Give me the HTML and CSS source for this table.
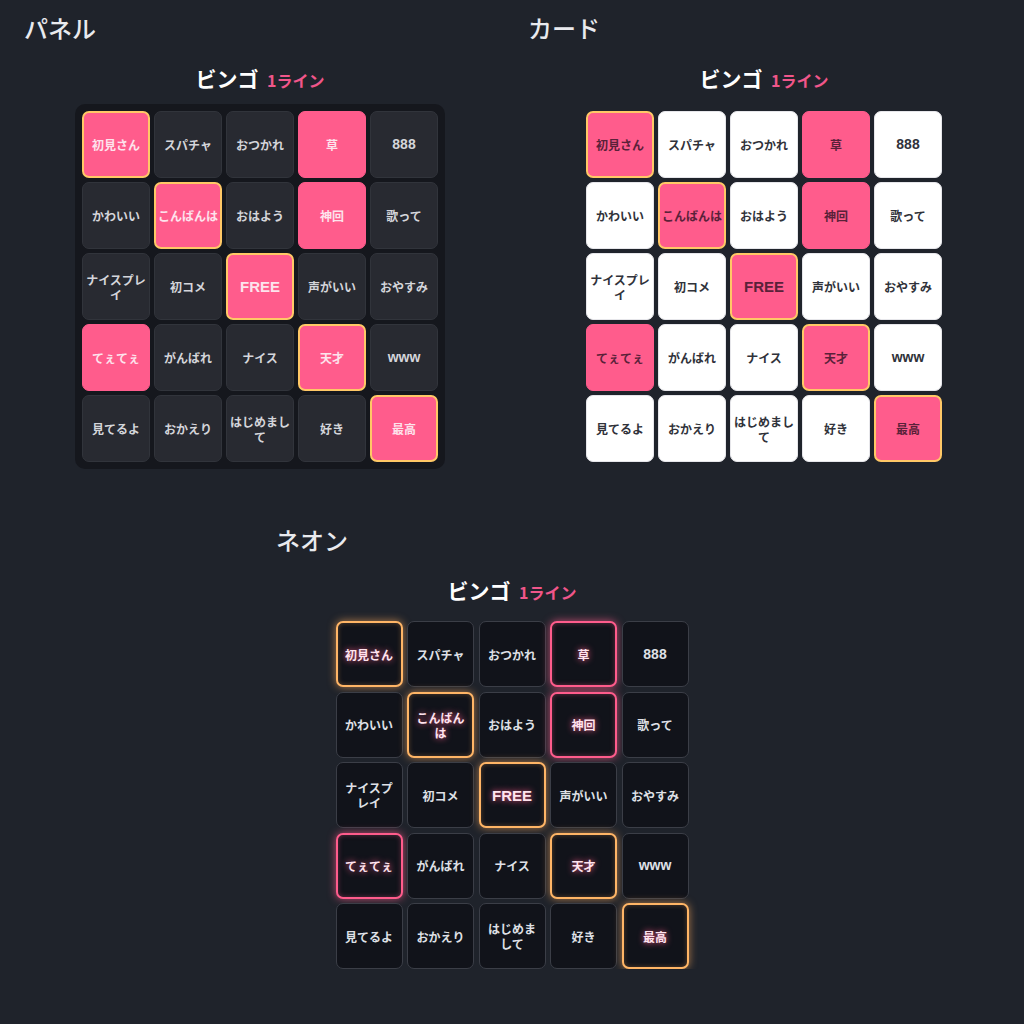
FILE: index.html
```html
<!DOCTYPE html>
<html lang="ja">
<head>
<meta charset="utf-8">
<title>ビンゴ スタイル</title>
<link rel="stylesheet" href="styles.css">
</head>
<body>
<main class="page">
  <section class="section">
    <h2 class="section-title">パネル</h2>
    <div class="bingo">
      <div class="bingo-title"><span class="bingo-name">ビンゴ</span> <span class="bingo-count">1ライン</span></div>
      <div class="board board--panel">
        <div class="cell is-marked is-line">初見さん</div>
        <div class="cell">スパチャ</div>
        <div class="cell">おつかれ</div>
        <div class="cell is-marked">草</div>
        <div class="cell is-latin">888</div>
        <div class="cell">かわいい</div>
        <div class="cell is-marked is-line">こんばんは</div>
        <div class="cell">おはよう</div>
        <div class="cell is-marked">神回</div>
        <div class="cell">歌って</div>
        <div class="cell">ナイスプレイ</div>
        <div class="cell">初コメ</div>
        <div class="cell is-marked is-line is-free">FREE</div>
        <div class="cell">声がいい</div>
        <div class="cell">おやすみ</div>
        <div class="cell is-marked">てぇてぇ</div>
        <div class="cell">がんばれ</div>
        <div class="cell">ナイス</div>
        <div class="cell is-marked is-line">天才</div>
        <div class="cell is-latin">www</div>
        <div class="cell">見てるよ</div>
        <div class="cell">おかえり</div>
        <div class="cell">はじめまして</div>
        <div class="cell">好き</div>
        <div class="cell is-marked is-line">最高</div>
      </div>
    </div>
  </section>

  <section class="section">
    <h2 class="section-title">カード</h2>
    <div class="bingo">
      <div class="bingo-title"><span class="bingo-name">ビンゴ</span> <span class="bingo-count">1ライン</span></div>
      <div class="board board--card">
        <div class="cell is-marked is-line">初見さん</div>
        <div class="cell">スパチャ</div>
        <div class="cell">おつかれ</div>
        <div class="cell is-marked">草</div>
        <div class="cell is-latin">888</div>
        <div class="cell">かわいい</div>
        <div class="cell is-marked is-line">こんばんは</div>
        <div class="cell">おはよう</div>
        <div class="cell is-marked">神回</div>
        <div class="cell">歌って</div>
        <div class="cell">ナイスプレイ</div>
        <div class="cell">初コメ</div>
        <div class="cell is-marked is-line is-free">FREE</div>
        <div class="cell">声がいい</div>
        <div class="cell">おやすみ</div>
        <div class="cell is-marked">てぇてぇ</div>
        <div class="cell">がんばれ</div>
        <div class="cell">ナイス</div>
        <div class="cell is-marked is-line">天才</div>
        <div class="cell is-latin">www</div>
        <div class="cell">見てるよ</div>
        <div class="cell">おかえり</div>
        <div class="cell">はじめまして</div>
        <div class="cell">好き</div>
        <div class="cell is-marked is-line">最高</div>
      </div>
    </div>
  </section>

  <section class="section">
    <h2 class="section-title">ネオン</h2>
    <div class="bingo">
      <div class="bingo-title"><span class="bingo-name">ビンゴ</span> <span class="bingo-count">1ライン</span></div>
      <div class="board board--neon">
        <div class="cell is-marked is-line">初見さん</div>
        <div class="cell">スパチャ</div>
        <div class="cell">おつかれ</div>
        <div class="cell is-marked">草</div>
        <div class="cell is-latin">888</div>
        <div class="cell">かわいい</div>
        <div class="cell is-marked is-line">こんばんは</div>
        <div class="cell">おはよう</div>
        <div class="cell is-marked">神回</div>
        <div class="cell">歌って</div>
        <div class="cell">ナイスプレイ</div>
        <div class="cell">初コメ</div>
        <div class="cell is-marked is-line is-free">FREE</div>
        <div class="cell">声がいい</div>
        <div class="cell">おやすみ</div>
        <div class="cell is-marked">てぇてぇ</div>
        <div class="cell">がんばれ</div>
        <div class="cell">ナイス</div>
        <div class="cell is-marked is-line">天才</div>
        <div class="cell is-latin">www</div>
        <div class="cell">見てるよ</div>
        <div class="cell">おかえり</div>
        <div class="cell">はじめまして</div>
        <div class="cell">好き</div>
        <div class="cell is-marked is-line">最高</div>
      </div>
    </div>
  </section>
</main>
</body>
</html>
```

FILE: styles.css
```css
* { box-sizing: border-box; }

html, body {
  margin: 0;
  background: #1f232b;
}

body {
  font-family: "Noto Sans CJK JP", "Noto Sans", sans-serif;
  color: #e8e9ee;
  padding: 15px 24px 0;
}

.page {
  display: flex;
  flex-wrap: wrap;
  justify-content: center;
  column-gap: 32px;
  row-gap: 58px;
}

.section {
  width: 472px;
}

.section-title {
  margin: 0;
  font-size: 24px;
  line-height: 26px;
  font-weight: 500;
  color: #e9eaee;
}

.bingo {
  display: flex;
  flex-direction: column;
  align-items: center;
  margin-top: 25px;
}

.bingo-title {
  height: 24px;
  line-height: 24px;
  white-space: nowrap;
}

.bingo-name {
  font-size: 21px;
  font-weight: 700;
  color: #ffffff;
}

.bingo-count {
  margin-left: 5px;
  font-size: 16px;
  font-weight: 700;
  color: #f0568a;
}

.board {
  margin-top: 14px;
  width: 370px;
  padding: 7px;
  border-radius: 10px;
  display: grid;
  grid-template-columns: repeat(5, 68px);
  grid-auto-rows: 67px;
  gap: 4px;
}

.cell {
  display: flex;
  align-items: center;
  justify-content: center;
  text-align: center;
  font-size: 12px;
  line-height: 15px;
  font-weight: 700;
  padding: 0 2px;
  border-radius: 7px;
  border: 1px solid transparent;
}

.cell.is-latin {
  font-family: "Liberation Sans", "Noto Sans CJK JP", sans-serif;
  font-size: 14px;
}

.cell.is-free {
  font-family: "Liberation Sans", "Noto Sans CJK JP", sans-serif;
  font-size: 15px;
}

/* panel */
.board--panel {
  background: #15171d;
}
.board--panel .cell {
  background: #282a31;
  border-color: #31343b;
  color: #d4d5da;
}
.board--panel .cell.is-marked {
  background: #ff5c8c;
  border-color: #ff5c8c;
  color: #fde3ec;
}
.board--panel .cell.is-line {
  border: 2px solid #ffc866;
}

/* card */
.board--card .cell {
  background: #ffffff;
  border-color: #e6e6ea;
  color: #30323a;
}
.board--card .cell.is-marked {
  background: #ff5c8c;
  border-color: #ff5c8c;
  color: #5a2139;
}
.board--card .cell.is-line {
  border: 2px solid #ffc866;
}

/* neon */
.board--neon {
  width: 353px;
  padding: 0;
  margin-top: 19px;
  grid-template-columns: repeat(5, 67px);
  grid-auto-rows: 66px;
  gap: 4.5px;
}
.board--neon .cell {
  background: #11131a;
  border-color: #3b3e47;
  color: #dfe0e6;
  padding: 0 6px;
}
.board--neon .cell.is-marked {
  border: 2px solid #ff5c8c;
  color: #ffe3ee;
  box-shadow: 0 0 9px rgba(255, 92, 140, 0.7), inset 0 0 5px rgba(255, 92, 140, 0.35);
  text-shadow: 0 0 6px rgba(255, 92, 140, 0.95);
}
.board--neon .cell.is-line {
  border-color: #ffb566;
  box-shadow: 0 0 9px rgba(255, 170, 90, 0.65), inset 0 0 5px rgba(255, 170, 90, 0.3);
}
```
